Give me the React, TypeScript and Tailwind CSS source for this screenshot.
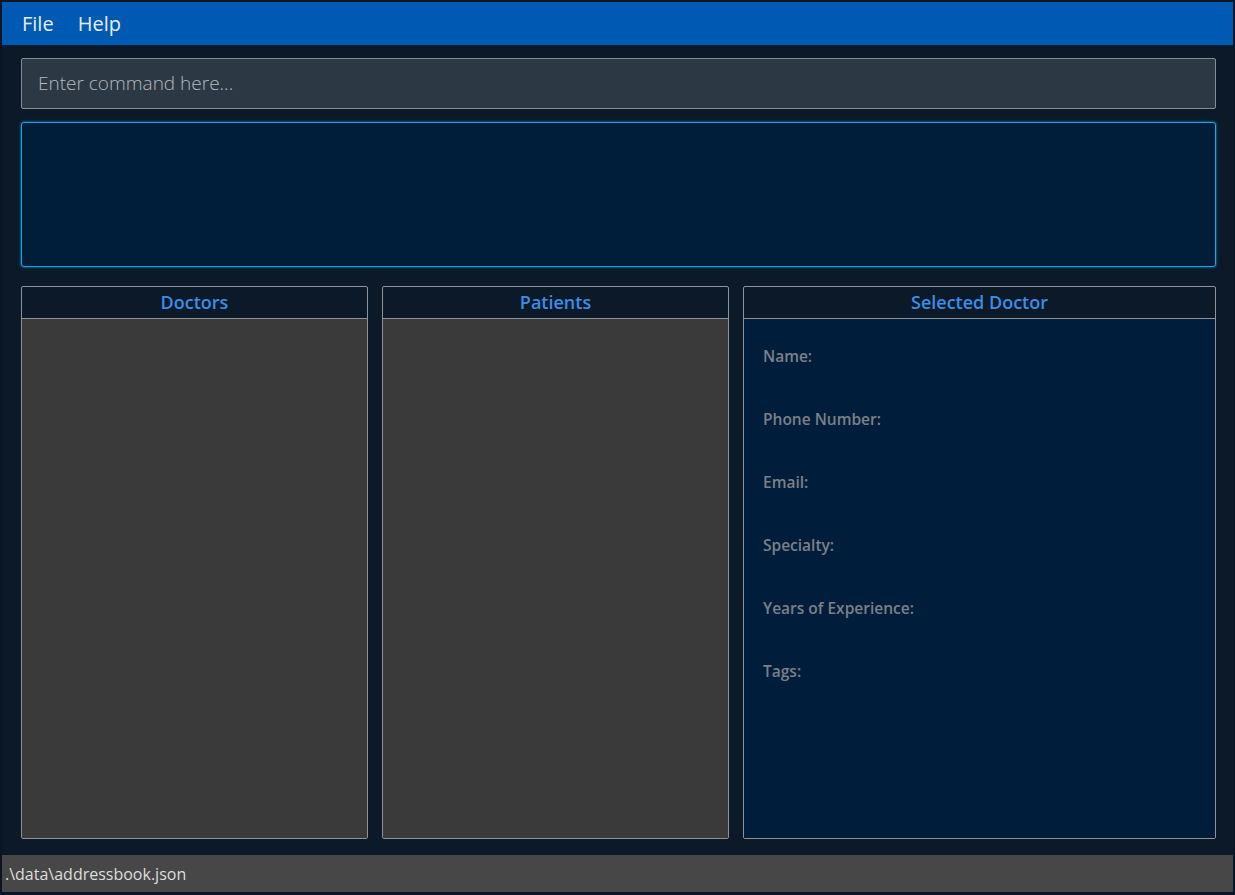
export default function App() {
  const fields = ['Name:', 'Phone Number:', 'Email:', 'Specialty:', 'Years of Experience:', 'Tags:'];

  return (
    <div className="w-[1235px] h-[895px] bg-[#0a1626] pt-[2px] pl-[2px] pr-[2px] pb-[3px] font-['Open_Sans',sans-serif] overflow-hidden">
      <div className="flex flex-col h-full bg-[#0b1928]">
        {/* menu bar */}
        <div className="flex items-center h-[43px] bg-[#0059b3] pl-[20px] gap-[24px] text-[20px] text-[#e8eef7]">
          <span>File</span>
          <span>Help</span>
        </div>

        <div className="flex-1 flex flex-col pt-[13px] pl-[19px] pr-[17px] pb-[16px] gap-[13px] min-h-0">
          {/* command box */}
          <div className="h-[51px] flex items-center px-[16px] bg-[#2d3845] border border-[#878c93] rounded-[2px]">
            <span className="text-[19px] font-light text-[#b4b8bc]">Enter command here...</span>
          </div>

          {/* result display */}
          <div className="h-[145px] bg-[#001e3a] border border-[#1ba3e3] rounded-[3px] shadow-[0_0_3px_#1690cc]" />

          {/* panels */}
          <div className="flex-1 flex gap-[14px] mt-[6px] min-h-0">
            <ListPanel title="Doctors" />
            <ListPanel title="Patients" />
            <div className="flex-1 flex flex-col border border-[#8f9399] rounded-[2px]">
              <div className="h-[32px] flex items-center justify-center border-b border-[#8f9399] text-[18px] font-semibold text-[#3a8ee6]">
                Selected Doctor
              </div>
              <div className="flex-1 bg-[#001e3c] pl-[19px] pt-[27px] flex flex-col gap-[41px]">
                {fields.map((f) => (
                  <div key={f} className="h-[22px] flex items-center text-[15.5px] font-semibold text-[#7c8087]">
                    {f}
                  </div>
                ))}
              </div>
            </div>
          </div>
        </div>

        {/* status bar */}
        <div className="h-[37px] flex items-center bg-[#474747] pl-[3px] text-[16px] text-[#dedede]">
          .\data\addressbook.json
        </div>
      </div>
    </div>
  );
}

function ListPanel({ title }: { title: string }) {
  return (
    <div className="w-[347px] flex flex-col border border-[#8f9399] rounded-[2px]">
      <div className="h-[32px] flex items-center justify-center border-b border-[#8f9399] text-[18px] font-semibold text-[#3a8ee6]">
        {title}
      </div>
      <div className="flex-1 bg-[#3a3a3a]" />
    </div>
  );
}
